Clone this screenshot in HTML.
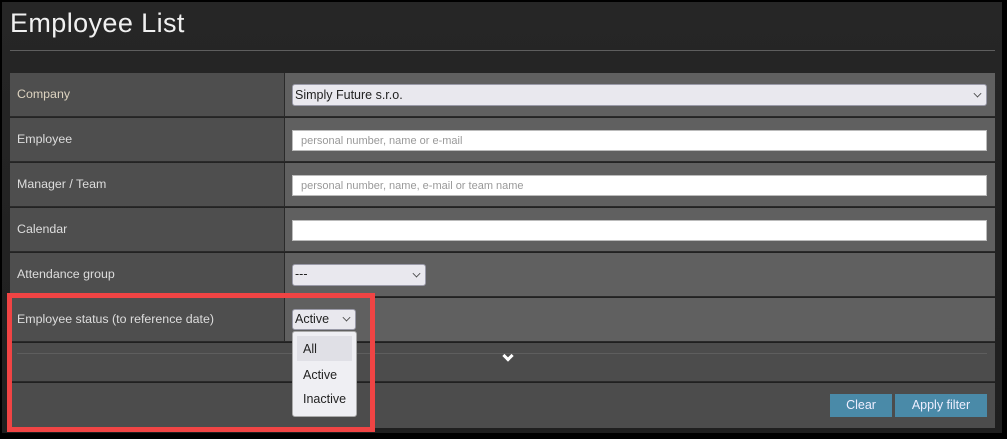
<!DOCTYPE html>
<html><head><meta charset="utf-8"><style>
*{box-sizing:border-box;margin:0;padding:0}
body{width:1007px;height:439px;background:#000;position:relative;overflow:hidden;font-family:"Liberation Sans",sans-serif;}
.pg{position:absolute;left:2px;top:2px;width:1000px;height:431px;background:linear-gradient(180deg,#262626,#1f1f1f);}
.ttl{position:absolute;left:10px;top:8px;font-size:27px;color:#f0f0f0;letter-spacing:0.4px}
.hr{position:absolute;left:10px;top:50px;width:985px;height:1px;background:#5e5e5e}
.row{position:absolute;left:10px;width:985px;height:44px;border-bottom:1px solid #2a2a2a}
.lab{position:absolute;left:0;top:0;width:275px;height:100%;background:#4e4e4e;border-right:1px solid #2a2a2a;color:#ddd;font-size:12.4px;padding:14px 7px}
.val{position:absolute;left:275px;top:0;right:0;height:100%;background:#606060}
.inp{position:absolute;left:7px;right:8px;top:12px;height:21px;background:#fff;border:1px solid #bbb;font-size:11px;color:#999;padding:4px 8px}
.sel{position:absolute;background:#e9e8ee;border:1px solid #9a9aa8;border-radius:3px;font-size:12.5px;color:#222;padding:2px 2px}
.chev{position:absolute;right:5px;top:3px;width:7px;height:7px;border-right:1.3px solid #444;border-bottom:1.3px solid #444;transform:rotate(45deg) scale(.8)}
.btn{position:absolute;top:394px;height:23px;background:#4a8aa8;color:#eef;font-size:12.5px;text-align:center;line-height:23px}
</style></head><body>
<div class="pg"></div>
<div class="ttl">Employee List</div>
<div class="hr"></div>
<div class="row" style="top:73px"><div class="lab" style="color:#ddd3c0">Company</div><div class="val"><div class="sel" style="left:7px;right:8px;top:11px;height:22px;padding:3px 2px">Simply Future s.r.o.<span class="chev" style="top:5px"></span></div></div></div>
<div class="row" style="top:118px"><div class="lab">Employee</div><div class="val"><div class="inp">personal number, name or e-mail</div></div></div>
<div class="row" style="top:163px"><div class="lab">Manager / Team</div><div class="val"><div class="inp">personal number, name, e-mail or team name</div></div></div>
<div class="row" style="top:208px"><div class="lab">Calendar</div><div class="val"><div class="inp"></div></div></div>
<div class="row" style="top:253px"><div class="lab">Attendance group</div><div class="val"><div class="sel" style="left:7px;top:11px;width:134px;height:22px">---<span class="chev" style="top:5px"></span></div></div></div>
<div class="row" style="top:298px"><div class="lab">Employee status (to reference date)</div><div class="val"><div class="sel" style="left:7px;top:11px;width:64px;height:21px;padding:2px 2px">Active<span class="chev" style="top:4px"></span></div></div></div>
<div style="position:absolute;left:10px;top:343px;width:985px;height:39px;background:#4c4c4c;border-bottom:1px solid #2a2a2a"></div>
<div style="position:absolute;left:17px;top:353px;width:970px;height:1px;background:#5e5e5e"></div>
<div style="position:absolute;left:504px;top:352px;width:8px;height:8px;border-right:3px solid #fff;border-bottom:3px solid #fff;transform:rotate(45deg)"></div>
<div style="position:absolute;left:10px;top:383px;width:985px;height:45px;background:#4c4c4c"></div>
<div class="btn" style="left:830px;width:62px">Clear</div>
<div class="btn" style="left:895px;width:92px">Apply filter</div>
<div style="position:absolute;left:292px;top:331px;width:65px;height:86px;background:#efeff3;border:1px solid #aaa;border-radius:3px;font-size:12.5px;color:#222">
<div style="margin:4px 4px 0 4px;height:25px;background:#e0e0e6;padding:6px 6px">All</div>
<div style="padding:7px 10px 0">Active</div>
<div style="padding:10px 10px 0">Inactive</div>
</div>
<div style="position:absolute;left:7px;top:293px;width:368px;height:139px;border:5px solid #f04444"></div>
</body></html>
